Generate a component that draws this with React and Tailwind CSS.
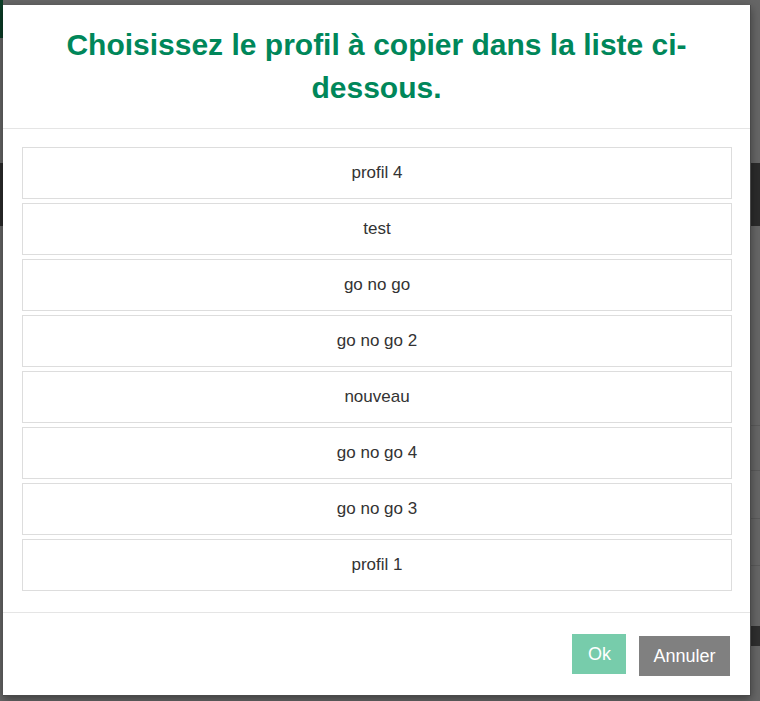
export default function App() {
  const items = ["profil 4", "test", "go no go", "go no go 2", "nouveau", "go no go 4", "go no go 3", "profil 1"];
  return (
    <div className="relative h-[701px] w-[760px] overflow-hidden bg-[#666666]" style={{ fontFamily: '"Liberation Sans", Arial, sans-serif' }}>
      {/* page behind the overlay */}
      <div className="flex h-full flex-col">
        <div className="flex h-[38px]">
          <div className="w-[3px] bg-[#0b3d26]" />
        </div>
        <div className="h-[125px]" />
        <div className="h-[63px] bg-[#2b2b2b]" />
        <div className="flex h-[199px] flex-col items-end" />
        <div className="flex flex-col items-end">
          <div className="h-[45px] w-[9px] border-t border-[#5a5a5a]" />
          <div className="h-[48px] w-[9px] border-t border-[#5a5a5a]" />
          <div className="h-[47px] w-[9px] border-t border-[#5a5a5a]" />
          <div className="h-[61px] w-[9px] border-t border-[#5a5a5a]" />
          <div className="h-[20px] w-[9px] bg-[#2f2f2f]" />
        </div>
      </div>

      {/* modal */}
      <div className="absolute left-[3px] top-[5px] flex h-[691px] w-[748px] flex-col border-r border-b border-[#4a4a4a] bg-white shadow-[0_3px_9px_rgba(0,0,0,0.4)]">
        <div className="border-b border-[#e5e5e5] px-[20px] pt-[18px] pb-[19px]">
          <h1 className="text-center text-[30px] font-bold leading-[43px] text-[#00875a]">
            Choisissez le profil à copier dans la liste ci-dessous.
          </h1>
        </div>
        <div className="flex flex-col gap-[4px] pt-[18px] pb-[21px] pl-[19px] pr-[18px]">
          {items.map((t) => (
            <div key={t} className="flex h-[52px] items-center justify-center border border-[#dddddd] text-[17px] text-[#333333]">
              {t}
            </div>
          ))}
        </div>
        <div className="flex flex-1 items-start justify-end gap-[13px] border-t border-[#e5e5e5] pt-[21px] pr-[20px]">
          <button className="h-[40px] bg-[#77ccab] pl-[16px] pr-[15px] text-[18px] text-white">Ok</button>
          <button className="mt-[2px] h-[40px] w-[91px] bg-[#808080] text-[18px] text-white">Annuler</button>
        </div>
      </div>
    </div>
  );
}
